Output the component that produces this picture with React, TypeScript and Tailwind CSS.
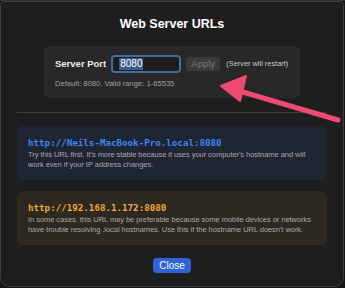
import React from "react"

const Arrow = () => (
  <svg className="absolute left-0 top-0 pointer-events-none" width="345" height="288" viewBox="0 0 345 288">
    <line x1="338" y1="120" x2="236" y2="90" stroke="#ef4a72" strokeWidth="5" strokeLinecap="round" />
    <polygon points="221,86 246,76 240,101" fill="#ef4a72" stroke="#ef4a72" strokeWidth="2" strokeLinejoin="round" />
  </svg>
)

const UrlCard: React.FC<{ url: string; desc: string; tone: "blue" | "orange" }> = ({ url, desc, tone }) => (
  <div className={`h-[54px] rounded-md pl-[11px] pr-[8px] pt-[10px] ${tone === "blue" ? "bg-[#1f2532]" : "bg-[#2d2820]"}`}>
    <div className={`whitespace-nowrap font-['DejaVu_Sans_Mono',monospace] text-[9.2px] font-bold leading-[13px] ${tone === "blue" ? "text-[#3d86f0]" : "text-[#f0a535]"}`}>{url}</div>
    <div className="mt-[1px] text-[7.5px] leading-[10px] tracking-[-0.05px] text-[#a8a8a8]">{desc}</div>
  </div>
)

export default function App() {
  return (
    <div className="relative w-[345px] h-[288px] bg-[#161616] overflow-hidden font-['Liberation_Sans',sans-serif]">
      <div className="h-[1px] bg-[#2c2f33]" />
      <div className="w-[344px] h-[286px] rounded-b-[10px] rounded-t-[4px] border border-[#3f3f3f] bg-[#1e1e1e] flex flex-col">
        <div className="text-center text-white font-bold text-[12.5px] leading-[18px] mt-[13px]">Web Server URLs</div>
        <div className="mx-[43px] mt-[13px] h-[52px] rounded-md bg-[#282828] px-[11px] pt-[9px]">
          <div className="flex items-center whitespace-nowrap">
            <span className="text-[9.5px] font-bold text-[#ececec]">Server Port</span>
            <div className="ml-[5px] w-[70px] h-[18px] rounded-[4px] border-2 border-[#3d6e9e] bg-[#1e1e1e] flex items-center pl-[6px]">
              <span className="bg-[#3a5e8c] text-white text-[10px] leading-[12px] px-[1px]">8080</span>
            </div>
            <div className="ml-[5px] h-[14px] w-[34px] rounded-[3px] bg-[#3a3a3a] text-[#7a7a7a] text-[9.5px] leading-[14px] text-center">Apply</div>
            <span className="ml-[6px] text-[7.4px] text-[#c8c8c8]">(Server will restart)</span>
          </div>
          <div className="mt-[5px] whitespace-nowrap text-[7.6px] text-[#a0a0a0]">Default: 8080. Valid range: 1-65535</div>
        </div>
        <div className="mx-[16px] mt-[14px] h-[1px] bg-[#3a3a3a]" />
        <div className="mx-[16px] mt-[13px] flex flex-col gap-[11px]">
          <UrlCard tone="blue" url="http://Neils-MacBook-Pro.local:8080" desc="Try this URL first. It's more stable because it uses your computer's hostname and will work even if your IP address changes." />
          <UrlCard tone="orange" url="http://192.168.1.172:8080" desc="In some cases, this URL may be preferable because some mobile devices or networks have trouble resolving .local hostnames. Use this if the hostname URL doesn't work." />
        </div>
        <div className="flex justify-center mt-[13px]">
          <button className="h-[15px] px-[6px] rounded-[4px] bg-[#2f63d8] text-white text-[10px] leading-[15px] font-medium">Close</button>
        </div>
      </div>
      <Arrow />
    </div>
  )
}
